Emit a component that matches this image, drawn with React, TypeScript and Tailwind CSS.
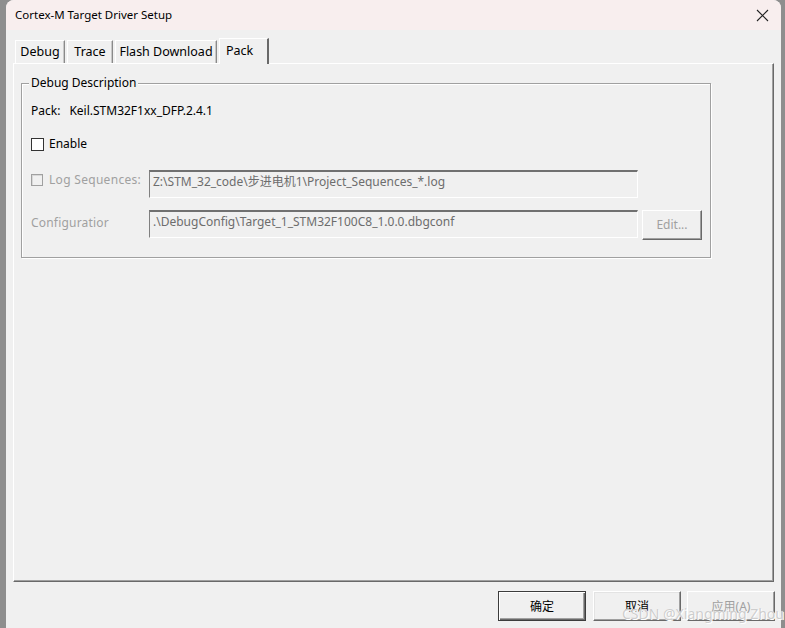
import React from "react";

const font = { fontFamily: '"Noto Sans", "Noto Sans CJK SC", sans-serif' };

function Tab({ label, w, selected }: { label: string; w: string; selected?: boolean }) {
  if (selected) {
    return (
      <div
        className={`${w} relative z-10 -mb-px h-[26px] flex items-start justify-start pl-[6px] pt-[3px] border-t border-l border-white border-r-2 border-r-[#696969] bg-[#f0f0f0] text-[12.5px] text-black`}
      >
        {label}
      </div>
    );
  }
  return (
    <div
      className={`${w} h-[23px] flex items-center justify-center pt-[1px] border-t border-l border-white border-r border-r-[#8a8a8a] shadow-[inset_-1px_0_0_#c8c8c8] text-[12.5px] text-black`}
    >
      {label}
    </div>
  );
}

function Checkbox({ disabled }: { disabled?: boolean }) {
  return disabled ? (
    <div className="w-[12px] h-[12px] border border-[#a0a0a0] bg-[#f0f0f0] shadow-[inset_1px_1px_0_#d8d8d8]" />
  ) : (
    <div className="w-[13px] h-[13px] border border-[#333333] bg-white" />
  );
}

function TextBox({ text }: { text: string }) {
  return (
    <div className="w-[489px] h-[28px] border-t-2 border-l border-t-[#707070] border-l-[#808080] border-b border-r border-white bg-[#f0f0f0] pl-[3px] pt-[2px] text-[12px] leading-[16px] text-[#6d6d6d] whitespace-nowrap">
      {text}
    </div>
  );
}

function Button({ label, variant }: { label: string; variant: "default" | "normal" | "disabled" }) {
  const base = "w-[88px] h-[30px] flex items-center justify-center pt-[1px] text-[12px]";
  if (variant === "default") {
    return (
      <div className={`${base} border border-[#3c3c3c] shadow-[inset_1px_1px_0_#ffffff,inset_-1px_-1px_0_#696969,inset_-2px_-2px_0_#a0a0a0] text-black`}>
        {label}
      </div>
    );
  }
  if (variant === "normal") {
    return (
      <div className={`${base} border-t border-l border-white border-r border-b border-r-[#696969] border-b-[#696969] shadow-[inset_-1px_-1px_0_#a0a0a0,inset_1px_1px_0_#e3e3e3] text-black`}>
        {label}
      </div>
    );
  }
  return (
    <div className={`${base} border-t border-l border-white border-r border-b border-r-[#696969] border-b-[#696969] shadow-[inset_-1px_-1px_0_#a0a0a0] text-[#a0a0a0]`}>
      {label}
    </div>
  );
}

export default function App() {
  return (
    <div className="relative w-[785px] h-[628px] flex bg-[#8e8e8e] overflow-hidden" style={font}>
      <div className="w-[6px] shrink-0" />
      <div className="w-[775px] shrink-0 flex flex-col bg-[#f0f0f0] rounded-t-[8px] overflow-hidden">
        {/* Title bar */}
        <div className="h-[30px] shrink-0 flex items-center justify-between bg-[#f8eeee] pl-[9px] pr-[8px]">
          <span className="text-[11.5px] text-black">Cortex-M Target Driver Setup</span>
          <svg width="13" height="13" viewBox="0 0 13 13" className="mr-[4px]">
            <path d="M1 1 L12 12 M12 1 L1 12" stroke="#222" strokeWidth="1.1" fill="none" />
          </svg>
        </div>

        <div className="flex-1 flex flex-col px-[7px] pt-[8px]">
          {/* Tabs */}
          <div className="h-[25px] flex items-end pl-[2px] gap-[2px]">
            <Tab label="Debug" w="w-[50px]" />
            <Tab label="Trace" w="w-[46px]" />
            <Tab label="Flash Download" w="w-[102px]" />
            <Tab label="Pack" w="w-[50px]" selected />
          </div>

          {/* Panel */}
          <div className="h-[519px] border-t border-l border-white border-r border-b border-r-[#696969] border-b-[#696969] shadow-[inset_-1px_-1px_0_#a0a0a0] pl-[7px] pt-[19px]">
            <div className="relative w-[690px] h-[175px] border border-[#a0a0a0] shadow-[1px_1px_0_#ffffff,inset_1px_1px_0_#ffffff] pl-[9px] pt-[19px]">
              <span className="absolute -top-[9px] left-[7px] bg-[#f0f0f0] px-[2px] text-[12px] leading-[16px] text-black">
                Debug Description
              </span>

              <div className="h-[16px] flex items-center text-[12px] leading-[16px] text-black">
                <span>Pack:</span>
                <span className="ml-[9px]">Keil.STM32F1xx_DFP.2.4.1</span>
              </div>

              <div className="mt-[17px] h-[16px] flex items-center gap-[5px] text-[12px] leading-[16px] text-black">
                <Checkbox />
                <span>Enable</span>
              </div>

              <div className="mt-[18px] flex items-start">
                <div className="w-[118px] h-[20px] flex items-center gap-[6px] text-[12px] leading-[16px] tracking-[0.3px] text-[#a0a0a0]">
                  <Checkbox disabled />
                  <span>Log Sequences:</span>
                </div>
                <TextBox text="Z:\STM_32_code\步进电机1\Project_Sequences_*.log" />
              </div>

              <div className="mt-[12px] flex items-start">
                <div className="w-[118px] h-[26px] flex items-center text-[12px] tracking-[0.2px] text-[#a0a0a0]">Configuratior</div>
                <TextBox text=".\DebugConfig\Target_1_STM32F100C8_1.0.0.dbgconf" />
                <div className="ml-[4px] w-[60px] h-[30px] flex items-center justify-center border-t border-l border-white border-r border-b border-r-[#696969] border-b-[#696969] shadow-[inset_-1px_-1px_0_#a0a0a0] text-[12px] text-[#a0a0a0]">
                  Edit...
                </div>
              </div>
            </div>
          </div>

          {/* Buttons */}
          <div className="mt-[9px] flex justify-end mr-[-1px]">
            <Button label="确定" variant="default" />
            <div className="w-[7px]" />
            <Button label="取消" variant="normal" />
            <div className="w-[6px]" />
            <Button label="应用(A)" variant="disabled" />
          </div>
        </div>
      </div>
      <div className="w-[4px] shrink-0" />

      <span
        className="absolute left-[622px] top-[604px] text-[14px] leading-[20px] text-[#cdcdcd] whitespace-nowrap"
        style={{ textShadow: "0 0 1px #ffffff, 1px 1px 0 #ffffff" }}
      >
        CSDN @Xiangming Zhou
      </span>
    </div>
  );
}
